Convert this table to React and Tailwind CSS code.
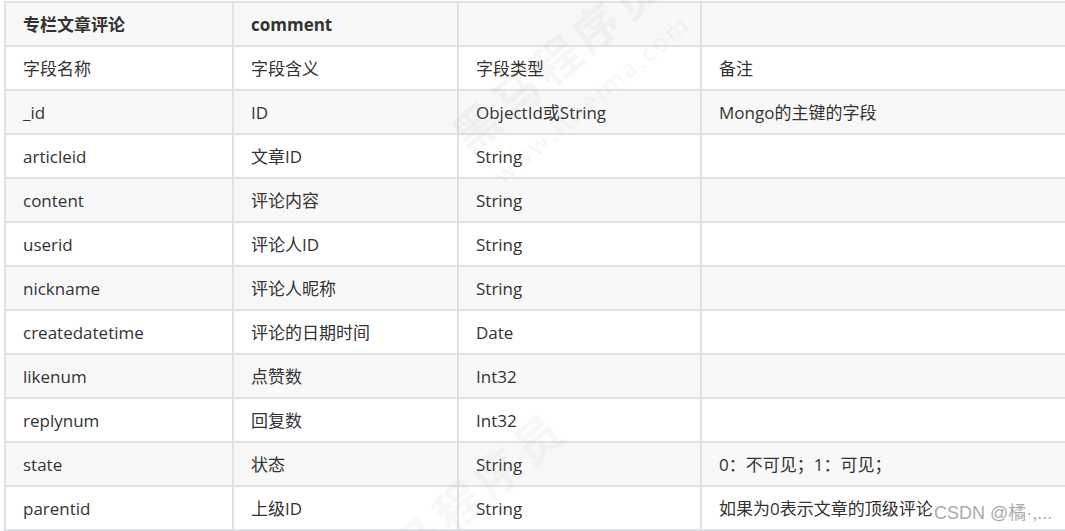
const rows = [
  ["字段名称", "字段含义", "字段类型", "备注"],
  ["_id", "ID", "ObjectId或String", "Mongo的主键的字段"],
  ["articleid", "文章ID", "String", ""],
  ["content", "评论内容", "String", ""],
  ["userid", "评论人ID", "String", ""],
  ["nickname", "评论人昵称", "String", ""],
  ["createdatetime", "评论的日期时间", "Date", ""],
  ["likenum", "点赞数", "Int32", ""],
  ["replynum", "回复数", "Int32", ""],
  ["state", "状态", "String", "0：不可见；1：可见；"],
  ["parentid", "上级ID", "String", "如果为0表示文章的顶级评论"],
];

export default function App() {
  return (
    <div
      className="relative w-[1065px] h-[531px] overflow-hidden bg-white pl-[4px] pt-[1px] text-[#333333]"
      style={{ fontFamily: '"Open Sans", "Noto Sans CJK SC", sans-serif' }}
    >
      <table className="table-fixed border-collapse w-[1140px] text-[17px]">
        <colgroup>
          <col className="w-[228px]" />
          <col className="w-[225px]" />
          <col className="w-[243px]" />
          <col className="w-[444px]" />
        </colgroup>
        <thead>
          <tr className="h-[44px] bg-[#f8f8f8]">
            <th className="border-2 border-[#dfe2e5] pl-[17px] pr-[16px] pt-[1px] text-left font-bold">专栏文章评论</th>
            <th className="border-2 border-[#dfe2e5] pl-[17px] pr-[16px] pt-[1px] text-left font-bold">comment</th>
            <th className="border-2 border-[#dfe2e5] px-[16px]"></th>
            <th className="border-2 border-[#dfe2e5] px-[16px]"></th>
          </tr>
        </thead>
        <tbody>
          {rows.map((r, i) => (
            <tr key={i} className={`h-[44px] ${i % 2 === 1 ? "bg-[#f8f8f8]" : "bg-white"}`}>
              {r.map((c, j) => (
                <td key={j} className="border-2 border-[#dfe2e5] pl-[17px] pr-[16px] pt-[1px] whitespace-nowrap">
                  {c}
                </td>
              ))}
            </tr>
          ))}
        </tbody>
      </table>

      {/* faint site watermark */}
      <div className="pointer-events-none absolute left-[440px] top-[20px] -rotate-[40deg] flex flex-col items-center text-[#a09090] opacity-[0.07]">
        <span className="text-[46px] font-bold tracking-[6px]">黑马程序员</span>
        <span className="text-[24px] tracking-[3px]">www.itheima.com</span>
      </div>
      <div className="pointer-events-none absolute left-[330px] top-[470px] -rotate-[40deg] text-[#a09090] opacity-[0.06] text-[46px] font-bold tracking-[6px]">
        黑马程序员
      </div>

      <span
        className="pointer-events-none absolute left-[934px] top-[500px] text-[18px] text-[#aaaaaa]"
        style={{ fontFamily: '"Liberation Sans", "Noto Sans CJK SC", sans-serif', textShadow: "0 0 2px #ffffff" }}
      >
        CSDN @橘·,...
      </span>
    </div>
  );
}
